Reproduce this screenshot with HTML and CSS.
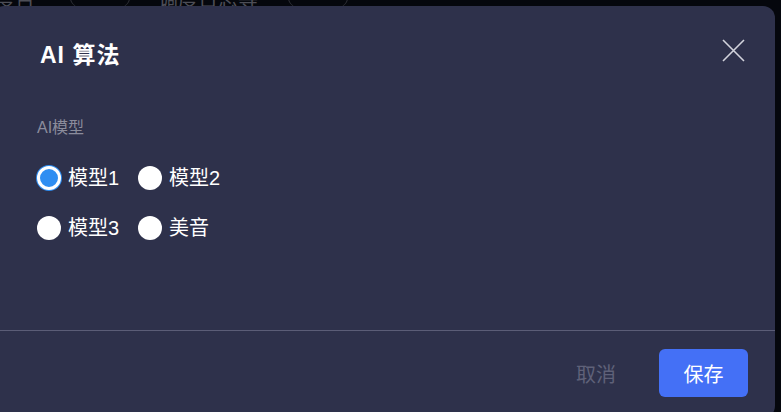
FILE: index.html
```html
<!DOCTYPE html>
<html lang="zh">
<head>
    <meta charset="UTF-8">
    <meta name="viewport" content="width=device-width, initial-scale=1.0">
    <title>AI 算法</title>
    <link rel="stylesheet" href="styles.css">
</head>
<body>

    <div class="page-head">
        <span class="head-item first">调度台</span>
        <span class="head-arc"></span>
        <span class="head-item">调度日志等</span>
        <span class="head-arc"></span>
    </div>

    <div class="modal">
        <div class="modal-header">
            <h2>AI 算法</h2>
            <button class="close" aria-label="关闭">
                <svg width="23" height="23" viewBox="0 0 23 23">
                    <path d="M1 1 L22 22 M22 1 L1 22" stroke="#d2d3dc" stroke-width="1.6" fill="none"/>
                </svg>
            </button>
        </div>

        <div class="modal-body">
            <div class="field-label">AI模型</div>
            <div class="radio-group">
                <label class="radio"><input type="radio" name="model" checked><span class="dot"></span>模型1</label>
                <label class="radio"><input type="radio" name="model"><span class="dot"></span>模型2</label>
                <label class="radio"><input type="radio" name="model"><span class="dot"></span>模型3</label>
                <label class="radio"><input type="radio" name="model"><span class="dot"></span>美音</label>
            </div>
        </div>

        <div class="modal-footer">
            <button class="cancel">取消</button>
            <button class="save">保存</button>
        </div>
    </div>

</body>
</html>
```

FILE: styles.css
```css
body {
    margin: 0;
    padding: 0;
    background: #05070d;
    font-family: 'Liberation Sans', 'Noto Sans CJK SC', sans-serif;
    overflow: hidden;
    height: 412px;
}

/* page behind the dialog, only its top edge shows */
.page-head {
    display: flex;
    align-items: center;
    height: 20px;
    margin-top: -12px;
    color: #4d4e57;
    font-size: 20px;
    white-space: nowrap;
}

.head-item.first {
    margin-left: -25px;
    margin-right: 35px;
}

.head-arc {
    width: 58px;
    height: 30px;
    margin-right: 28px;
    border-left: 1px solid #2e2f37;
    border-right: 1px solid #2e2f37;
    border-radius: 50%;
}

.head-item {
    margin-right: 30px;
}

.modal {
    position: absolute;
    top: 6px;
    left: -8px;
    width: 783px;
    height: 412px;
    background: #2e314b;
    border-radius: 12px;
    display: flex;
    flex-direction: column;
}

.modal-header {
    display: flex;
    justify-content: space-between;
    align-items: flex-start;
    padding: 34px 30px 0 48px;
    height: 64px;
    box-sizing: border-box;
}

h2 {
    margin: 0;
    color: #ffffff;
    font-size: 23px;
    font-weight: bold;
    line-height: 30px;
    letter-spacing: 1px;
}

.close {
    background: none;
    border: none;
    padding: 0;
    margin-top: -1px;
    width: 23px;
    height: 23px;
    cursor: pointer;
}

.modal-body {
    padding: 47px 45px 0;
    height: 261px;
    box-sizing: border-box;
    border-bottom: 1px solid #5b5d77;
}

.field-label {
    color: #8b8c9c;
    font-size: 16px;
    line-height: 22px;
}

.radio-group {
    display: grid;
    grid-template-columns: 101px 101px;
    row-gap: 26px;
    margin-top: 27px;
}

.radio {
    display: flex;
    align-items: center;
    gap: 7px;
    color: #ffffff;
    font-size: 20px;
    line-height: 24px;
    cursor: pointer;
}

.radio input {
    display: none;
}

.dot {
    width: 24px;
    height: 24px;
    border-radius: 50%;
    background: #ffffff;
    box-sizing: border-box;
}

.radio input:checked + .dot {
    background: #2f8ef2;
    border: 3px solid #ffffff;
    box-shadow: 0 0 0 1px #2f8ef2;
}

.modal-footer {
    display: flex;
    justify-content: flex-end;
    align-items: center;
    gap: 43px;
    padding: 18px 27px 0 0;
}

.cancel {
    background: none;
    border: none;
    color: #5f6179;
    font-family: inherit;
    font-size: 20px;
    padding: 0;
    cursor: pointer;
}

.save {
    width: 89px;
    height: 48px;
    background: #4470f6;
    border: none;
    border-radius: 6px;
    color: #ffffff;
    font-family: inherit;
    font-size: 20px;
    cursor: pointer;
}
```
